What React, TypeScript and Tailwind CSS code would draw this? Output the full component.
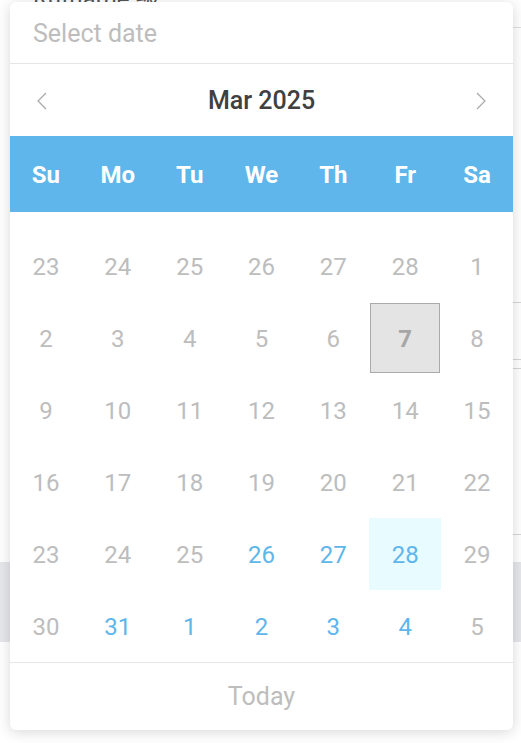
import React from "react";

const GREY = "text-[#bdbdbd]";
const BLUE = "text-[#5eb6ea]";

type Day = { n: number; cur: boolean; blue?: boolean; sel?: boolean; hl?: boolean };

const rows: Day[][] = [
  [23, 24, 25, 26, 27, 28, 1].map((n) => ({ n, cur: false })),
  [2, 3, 4, 5, 6, 7, 8].map((n) => ({ n, cur: true, sel: n === 7 })),
  [9, 10, 11, 12, 13, 14, 15].map((n) => ({ n, cur: true })),
  [16, 17, 18, 19, 20, 21, 22].map((n) => ({ n, cur: true })),
  [23, 24, 25, 26, 27, 28, 29].map((n) => ({ n, cur: true, blue: n >= 26 && n <= 28, hl: n === 28 })),
  [30, 31, 1, 2, 3, 4, 5].map((n, i) => ({ n, cur: i < 2, blue: i >= 1 && i <= 5 })),
];

function Chevron({ dir }: { dir: "left" | "right" }) {
  return (
    <svg width="12" height="18" viewBox="0 0 12 18" fill="none">
      {dir === "left" ? (
        <polyline points="10,1 2,9 10,17" stroke="#a8a8a8" strokeWidth="1.2" />
      ) : (
        <polyline points="2,1 10,9 2,17" stroke="#a8a8a8" strokeWidth="1.2" />
      )}
    </svg>
  );
}

export default function App() {
  return (
    <div
      className="relative w-[521px] h-[743px] overflow-hidden bg-white"
      style={{ fontFamily: "Roboto, 'Noto Sans CJK SC', sans-serif" }}
    >
      {/* background page */}
      <div className="flex flex-col">
        <div className="h-[28px] border-b border-[#e0e0e0] ml-[200px] relative">
          <span className="absolute -top-[19px] -left-[167px] text-[24px] text-[#555]">Rufname 級</span>
        </div>
        <div className="h-[274px] flex justify-end pr-0">
          <span className="mt-[3px] mr-[-6px] text-[18px] text-[#888]">›</span>
        </div>
        <div className="h-[57px] border-t border-[#d6d6d6] ml-[200px]" />
        <div className="h-[9px] border-t border-[#d6d6d6] ml-[200px]" />
        <div className="h-[166px] border-t border-[#d6d6d6] ml-[200px]" />
        <div className="h-[28px] border-t border-[#d6d6d6] ml-[200px]" />
        <div className="h-[80px] bg-[#e6e7eb]" />
      </div>

      {/* popup */}
      <div className="absolute left-[10px] top-[2px] w-[503px] bg-white rounded-[6px] shadow-[0_2px_14px_rgba(0,0,0,0.16)] flex flex-col">
        <div className="h-[62px] flex items-center pl-[23px] pt-[3px] border-b border-[#e6e6e6]">
          <span className={`text-[25px] ${GREY}`}>Select date</span>
        </div>
        <div className="h-[72px] flex items-center justify-between px-[26px] pt-[1px]">
          <Chevron dir="left" />
          <span className="text-[25px] font-medium text-[#404040] pt-[1px]">Mar 2025</span>
          <Chevron dir="right" />
        </div>
        <div className="h-[76px] bg-[#5eb6ea] grid grid-cols-7 items-center pt-[2px]">
          {["Su", "Mo", "Tu", "We", "Th", "Fr", "Sa"].map((d) => (
            <div key={d} className="text-center text-white font-bold text-[24px]">
              {d}
            </div>
          ))}
        </div>
        <div className="pt-[18px] grid grid-cols-7">
          {rows.flat().map((d, i) => (
            <div
              key={i}
              className={`h-[72px] flex items-center justify-center ${d.hl ? "bg-[#e8fbff]" : ""}`}
            >
              {d.sel ? (
                <div className="w-[70px] h-[70px] border border-[#aaaaaa] bg-[#e4e4e4] flex items-center justify-center pt-[1px] text-[24px] font-bold text-[#a6a6a6]">
                  {d.n}
                </div>
              ) : (
                <span className={`text-[24px] pt-[2px] ${d.blue ? BLUE : GREY}`}>{d.n}</span>
              )}
            </div>
          ))}
        </div>
        <div className="h-[68px] border-t border-[#e6e6e6] flex items-center justify-center pt-[1px]">
          <span className={`text-[25px] ${GREY}`}>Today</span>
        </div>
      </div>
    </div>
  );
}
